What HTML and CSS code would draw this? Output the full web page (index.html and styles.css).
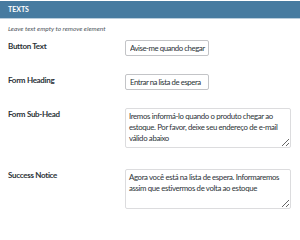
FILE: index.html
```html
<!DOCTYPE html>
<html lang="pt">
<head>
    <meta charset="UTF-8">
    <title>Texts</title>
    <link rel="stylesheet" href="styles.css">
</head>
<body>
    <div class="panel">
        <div class="panel-head">TEXTS</div>
        <p class="hint">Leave text empty to remove element</p>
        <div class="row">
            <label class="lbl">Button Text</label>
            <input type="text" class="inp" value="Avise-me quando chegar">
        </div>
        <div class="row">
            <label class="lbl">Form Heading</label>
            <input type="text" class="inp" value="Entrar na lista de espera">
        </div>
        <div class="row row-big">
            <label class="lbl">Form Sub-Head</label>
            <textarea class="area">Iremos informá-lo quando o produto chegar ao estoque. Por favor, deixe seu endereço de e-mail válido abaixo</textarea>
        </div>
        <div class="row row-big">
            <label class="lbl">Success Notice</label>
            <textarea class="area">Agora você está na lista de espera. Informaremos assim que estivermos de volta ao estoque</textarea>
        </div>
    </div>
</body>
</html>
```
FILE: styles.css
```css
body{
    margin:0;
    background:#fff;
    font-family:Lato, "Noto Sans", sans-serif;
    color:#3c434a;
}
.panel{
    padding-top:1px;
}
.panel-head{
    background:#477ba0;
    border-bottom:1px solid #b9cddc;
    color:#fff;
    font-weight:bold;
    font-size:7px;
    height:17px;
    line-height:17px;
    padding:0 8px;
}
.hint{
    margin:6px 8px 8px;
    font-size:6.5px;
    font-style:italic;
    color:#50575e;
}
.row{
    display:flex;
    align-items:flex-start;
    padding:0 9px 0 8px;
    margin-bottom:18px;
}
.row-big{
    margin-bottom:21px;
}
.lbl{
    width:117px;
    font-size:8px;
    letter-spacing:-0.3px;
    font-weight:bold;
    color:#2c3338;
    padding-top:1px;
}
.inp{
    width:84px;
    height:16px;
    box-sizing:border-box;
    border:1px solid #c3c4c7;
    border-radius:2px;
    padding:0 2px 0 4px;
    font-family:inherit;
    font-size:7.8px;
    letter-spacing:-0.45px;
    color:#2c3338;
}
.area{
    flex:1;
    height:40px;
    box-sizing:border-box;
    border:1px solid #dcdcde;
    border-radius:2px;
    padding:2px 3px;
    font-family:inherit;
    font-size:7.8px;
    letter-spacing:-0.35px;
    line-height:11px;
    color:#2c3338;
    resize:vertical;
}
```
